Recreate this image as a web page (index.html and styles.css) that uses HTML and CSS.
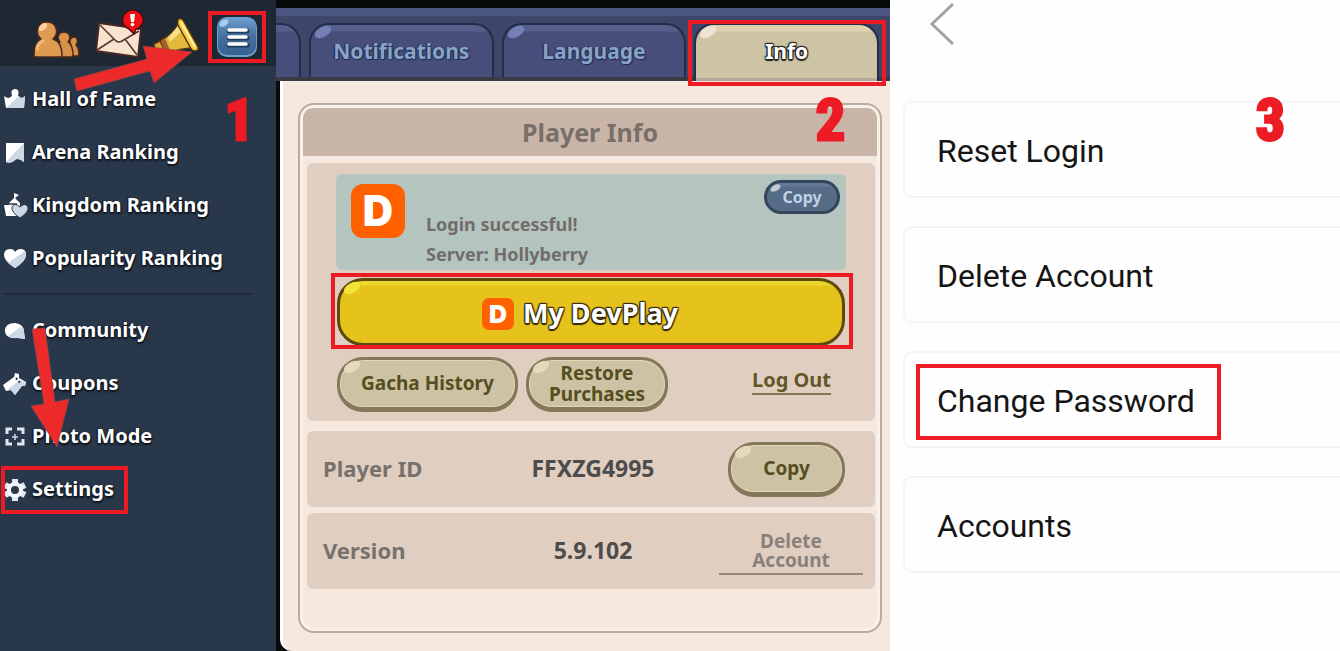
FILE: index.html
```html
<!DOCTYPE html>
<html lang="en">
<head>
<meta charset="utf-8">
<title>Change password guide</title>
<link rel="stylesheet" href="styles.css">
</head>
<body>
<main class="guide">
  <section class="side">
    <header class="side-top">
      <button class="icon-btn" aria-label="Friends">
        <svg width="48" height="52" viewBox="32 4 48 52">
          <g fill="#d8924a" stroke="#4a2a1c" stroke-width="1.5" stroke-linejoin="round">
            <path d="M68 51c0-6 1-9 3-11-3-4 0-8 3-8s5 4 2 8c2 2 3 5 3 9q0 2-2 2z"/>
            <path d="M57 52c0-9 0-12 3-15-4-5-1-10 4-10s8 5 4 10c3 2 5 7 5 13q0 2-2 2z"/>
            <path d="M34 50c0-9 2-14 7-16-7-7-3-17 6-17s13 10 6 17c6 2 9 7 9 16q0 2-2 2H36q-2 0-2-2z" fill="#e09b52"/>
          </g>
          <ellipse cx="43" cy="22" rx="5" ry="3" fill="#fbd3a3" transform="rotate(-40 43 22)"/>
          <path d="M37 44q1-6 6-8" fill="none" stroke="#f2b878" stroke-width="3" stroke-linecap="round"/>
        </svg>
      </button>
      <button class="icon-btn" aria-label="Mail">
        <svg width="56" height="52" viewBox="88 4 56 52">
          <path d="M99 18l42 6-3 28-42-6z" fill="#f8e3cf" stroke="#452824" stroke-width="2" stroke-linejoin="round"/>
          <path d="M100 20l16 16q3 2 6 0l17-10M97 45l17-11M137 50l-12-16" fill="none" stroke="#5a3832" stroke-width="1.6"/>
          <path d="M132 5a11 10 0 0 1 8 17q-2 2-4 2l-2 5-5-5a11 10 0 0 1 3-19z" fill="#ee1216" stroke="#4a0b10" stroke-width="1.5"/>
          <path d="M130 9h5l-1 8h-3z" fill="#fff"/><circle cx="132.500" cy="19.500" r="1.800" fill="#fff"/>
        </svg>
      </button>
      <button class="icon-btn" aria-label="News">
        <svg width="48" height="52" viewBox="152 4 48 52">
          <path d="M154 39l8-4 5 13-6 3c-4-2-7-7-7-12z" fill="#d9a92e" stroke="#533415" stroke-width="1.500"/>
          <path d="M166 48l8-1 3 5-7 2z" fill="#a35b28" stroke="#533415"/>
          <path d="M160 36q12-6 20-20l14 27q-14 0-27 6z" fill="#e2b93c" stroke="#533415" stroke-width="1.500"/>
          <path d="M161 36l4-3 6 15-5 1z" fill="#a9602c"/>
          <path d="M168 33l11-13 3 6-12 11z" fill="#f6df85"/>
          <path d="M178 15q2-3 5 0l15 27q1 4-3 4-3 0-5-4l-12-22q-1-3 0-5z" fill="#f7cf3a" stroke="#533415" stroke-width="1.500"/>
          <path d="M181 17l14 25" stroke="#fff0a6" stroke-width="2"/>
        </svg>
      </button>
      <button class="menu-btn" aria-label="Menu">
        <svg width="42" height="42" viewBox="215 14 42 42">
          <defs><linearGradient id="blue" x2="0" y2="1"><stop stop-color="#6d9fd0"/><stop offset=".5" stop-color="#456f9f"/><stop offset="1" stop-color="#38628f"/></linearGradient></defs>
          <rect x="216" y="15" width="40" height="40" rx="10" fill="#6ba0cf"/>
          <rect x="217" y="16" width="38" height="37" rx="9" fill="url(#blue)"/>
          <ellipse cx="223" cy="21" rx="5" ry="3" fill="#a9cdec" transform="rotate(-35 223 21)"/>
          <path d="M228 29h18M228 36h18M228 43h18" stroke="#213c60" stroke-width="5" stroke-linecap="round"/>
          <path d="M228 28h17M228 35h17M228 42h17" stroke="#fff" stroke-width="3.600" stroke-linecap="round"/>
        </svg>
      </button>
    </header>
    <nav class="nav">
      <a class="nav-link" href="#fame"><svg width="24" height="24" viewBox="0 0 24 24"><path d="M2 20L0 8q2 2 5 2l3-2q-2-7 3-7t3 7l3 2q3 0 4-2l-1 12z" fill="#fff"/><path d="M2 20L15 8l2 2q3 0 4-2l-1 12z" fill="#cdd8e6"/></svg>Hall of Fame</a>
      <a class="nav-link" href="#arena"><svg width="24" height="24" viewBox="0 0 24 24"><path d="M2 2h18v19q-6-5-9-2-4 4-9 2z" fill="#fff"/><path d="M20 2v19q-6-5-9-2-4 4-9 2z" fill="#cdd8e6"/></svg>Arena Ranking</a>
      <a class="nav-link" href="#kingdom"><svg width="24" height="26" viewBox="0 0 24 26"><path d="M0 12h5v-2l5-5V0l5 2-4 3 5 5v4l-2 9H2z" fill="#fff"/><path d="M4 11h9" stroke="#29374a" stroke-width="1.500"/><path d="M16 25q-9-6-8-11 3-5 8 0 5-5 8 0 1 5-8 11z" fill="#cdd8e6" stroke="#29374a"/></svg>Kingdom Ranking</a>
      <a class="nav-link" href="#popularity"><svg width="24" height="24" viewBox="0 0 24 24"><path d="M11 21Q0 14 0 8 0 2 6 2q4 0 5 3 2-3 6-3 5 0 5 6 0 6-11 13z" fill="#fff"/><path d="M11 21l-7-5L21 4q1 2 1 4 0 6-11 13z" fill="#cdd8e6"/></svg>Popularity Ranking</a>
      <hr class="nav-rule">
      <a class="nav-link" href="#community"><svg width="24" height="24" viewBox="0 0 24 24"><path d="M11 4q9 1 9 9l1 7-7-1Q1 20 1 12q0-8 10-8z" fill="#fff"/><path d="M4 17L18 7q2 2 2 6l1 7-7-1q-7 1-10-2z" fill="#cdd8e6"/></svg>Community</a>
      <a class="nav-link" href="#coupons"><svg width="24" height="24" viewBox="0 0 24 24"><path d="M-1 13l11-8 1-4 4 1v4l7 4-1 4h-3l-7 9-4-5-5 1z" fill="#fff"/><path d="M4 17L16 8l6 3-1 3h-3l-7 9-3-4z" fill="#cdd8e6"/><path d="M12 6l5 6" stroke="#29374a" stroke-width="2" stroke-dasharray="2 2"/></svg>Coupons</a>
      <a class="nav-link" href="#photo"><svg width="24" height="24" viewBox="0 0 24 24"><path d="M3 9V4h5M13 4h6v5M19 14v5h-6M8 19H3v-5" fill="none" stroke="#dfe6ef" stroke-width="3"/><path d="M11 9v6M8 12h6" stroke="#cdd8e6" stroke-width="1.500"/></svg>Photo Mode</a>
      <a class="nav-link" href="#settings"><svg width="24" height="24" viewBox="0 0 24 24"><path d="M11 1v22M1 7l20 10M1 17L21 7" stroke="#e3e9f1" stroke-width="6"/><circle cx="11" cy="12" r="6" fill="#29374a" stroke="#f3f6fa" stroke-width="4"/></svg>Settings<span class="frame frame-settings"></span></a>
    </nav>
    <svg class="arrows" width="276" height="460" viewBox="0 0 276 460" aria-hidden="true" fill="#ec2a2a" stroke="#8a4b50" stroke-width=".6">
      <path d="M74 79l3 12 73-20 4 12 38-31-49-6 4 13z"/>
      <path d="M32 329l13-1 10 74 14-3-12 48-26-41 13-2z"/>
    </svg>
    <span class="step step-1">1</span>
  </section>

  <section class="game">
    <div class="tabs">
      <button class="tab tab-cut" aria-label="Previous tab"></button>
      <button class="tab shine">Notifications</button>
      <button class="tab shine">Language</button>
      <button class="tab tab-on shine">Info<span class="frame frame-tab"></span></button>
    </div>
    <div class="sheet">
      <div class="card">
        <h2 class="card-title">Player Info</h2>
        <div class="panel account">
          <div class="login">
            <span class="logo">D</span>
            <p class="login-text">Login successful!<br>Server: Hollyberry</p>
            <button class="copy-small shine">Copy</button>
          </div>
          <button class="devplay shine"><span class="logo logo-small">D</span>My DevPlay<span class="frame frame-dev"></span></button>
          <div class="actions">
            <button class="pill pill-wide shine">Gacha History</button>
            <button class="pill pill-mid shine">Restore<br>Purchases</button>
            <a class="logout" href="#logout">Log Out</a>
          </div>
        </div>
        <div class="panel row">
          <span class="row-label">Player ID</span>
          <span class="row-value">FFXZG4995</span>
          <button class="pill shine">Copy</button>
        </div>
        <div class="panel row">
          <span class="row-label">Version</span>
          <span class="row-value">5.9.102</span>
          <a class="delete" href="#delete">Delete<br>Account</a>
        </div>
      </div>
    </div>
    <span class="step step-2">2</span>
  </section>

  <section class="web">
    <button class="back" aria-label="Back"><svg width="26" height="44" viewBox="0 0 26 44"><path d="M24 2L3 22l21 20" fill="none" stroke="#a3a3a3" stroke-width="3"/></svg></button>
    <div class="options">
      <a class="option" href="#reset">Reset Login</a>
      <a class="option" href="#delete-account">Delete Account</a>
      <a class="option" href="#password">Change Password<span class="frame frame-pass"></span></a>
      <a class="option" href="#accounts">Accounts</a>
    </div>
    <span class="step step-3">3</span>
  </section>
</main>
</body>
</html>
```
FILE: styles.css
```css
* { box-sizing: border-box; }
body { margin: 0; background: #fefefe; font-family: "Noto Sans", "Open Sans", sans-serif; }
button { font: inherit; color: inherit; border: 0; padding: 0; background: none; cursor: pointer; }
a { color: inherit; text-decoration: none; }
svg { display: block; flex: none; }

.guide { display: grid; grid-template-columns: 276fr 614fr 450fr; min-height: 100vh; overflow: hidden; }
.frame { position: absolute; border: 4px solid #ed1c24; pointer-events: none; }
.step { position: absolute; top: 87px; font: bold 58px/66px "Liberation Sans Narrow", "Roboto Condensed", sans-serif; color: #ed1c24; -webkit-text-stroke: 3px #ed1c24; }

/* glossy spot in a button's top left corner */
.shine { position: relative; }
.shine::before { content: ""; position: absolute; left: 3px; top: 2px; width: 18px; height: 10px; border-radius: 50%; background: #e4dabc; transform: rotate(-30deg); }

/* left: game menu */
.side { position: relative; background: #29374a; }
.side-top { display: flex; gap: 8px; height: 66px; padding: 4px 9px 0 32px; background: #1e2833; }
.menu-btn { display: grid; place-items: center; width: 58px; height: 52px; margin-top: 7px; border: 4px solid #ed1c24; }
.nav { display: flex; flex-direction: column; gap: 21px; padding: 16px 24px 0 4px; }
.nav-link { position: relative; display: flex; align-items: center; gap: 4px; height: 32px; align-self: flex-start;
  font-weight: bold; font-size: 20px; color: #fff; text-shadow: 1px 1px 1px #10161f, 0 2px 2px #10161f, -1px 0 1px #10161f; }
.nav-link svg { margin-top: 4px; overflow: visible; }
.nav-rule { width: 100%; height: 2px; margin: -1px 0 -3px; border: 0; background: #1f2b3a; }
.arrows { position: absolute; top: 0; left: 0; }
.frame-settings { inset: -6px -14px -10px -3px; }
.step-1 { right: 22px; }

/* middle: settings window */
.game { position: relative; display: flex; flex-direction: column; padding-top: 8px; background: #080b0c; }
.tabs { display: flex; gap: 8px; height: 73px; padding: 15px 11px 0 0; border-bottom: 4px solid #383b44;
  background: linear-gradient(#4b5680 8px, #3e4669 8px); }
.tab { position: relative; flex: 1; border: 2px solid #232c49; border-bottom: 0; border-radius: 20px 20px 0 0;
  background: linear-gradient(#565f8c 6px, #474e7a 7px);
  font-weight: bold; font-size: 21px; color: #88a3c8; text-shadow: 1px 1px 1px #202a48, -1px 0 1px #202a48; }
.tab::before { background: #7380b8; }
.tab-cut { flex: 0 0 25px; border-left: 0; border-radius: 0 20px 0 0; }
.tab-on { margin-bottom: -4px; padding-bottom: 4px; color: #fff; text-shadow: 1px 1px 1px #222, -1px -1px 1px #222, 1px -1px 1px #222, -1px 1px 1px #222, 0 2px 1px #222;
  background: linear-gradient(#e2d1b0 6px, #ccc4a5 7px 53px, #b3a69a 53px); }
.tab-on::before { background: #efe3d2; }
.frame-tab { inset: -5px -9px -5px -8px; z-index: 1; }
.sheet { flex: 1; margin-left: 4px; padding: 22px 8px 18px 15px; border-left: 3px solid #fff; border-radius: 0 0 0 12px; background: #f5e8de; }
.card { display: flex; flex-direction: column; min-height: 530px; padding: 3px; border: 2px solid #bbaa9f; border-radius: 16px; box-shadow: inset 0 0 0 3px #faf1ea; }
.card-title { margin: 0 0 7px; border-radius: 10px 10px 0 0; font-size: 25px; line-height: 48px; text-align: center; color: #796f69; background: #c9b5a7; }
.panel { margin: 0 2px 6px 4px; border-radius: 6px; background: #e0cec0; }
.account { margin-bottom: 10px; padding: 11px 29px 9px; }
.login { display: flex; align-items: flex-start; height: 96px; padding: 6px 6px 0 15px; border-radius: 6px; background: #b4c5c0; }
.logo { display: grid; place-items: center; width: 54px; height: 54px; margin-top: 4px; border-radius: 12px; background: #ff6000;
  font: 900 42px/54px Inter, "Open Sans", sans-serif; color: #fff; }
.login-text { flex: 1; margin: 29px 0 0 21px; font-size: 18px; line-height: 30px; font-weight: bold; color: #716d69; }
.copy-small { width: 76px; height: 34px; border: 3px solid #35465a; border-radius: 17px; font-weight: bold; font-size: 16px; line-height: 20px; color: #c0d2e6;
  background: linear-gradient(#64799a 3px, #566c87 4px); }
.copy-small::before { width: 11px; height: 6px; background: #c3ccd5; }
.devplay { display: flex; align-items: center; justify-content: center; gap: 9px; width: calc(100% - 2px); height: 68px; margin: 8px 0 0 1px; padding-right: 22px;
  border: 3px solid #5b4a0c; border-radius: 26px; font-weight: bold; font-size: 27px; color: #fff;
  text-shadow: 1px 1px 1px #31280a, -1px -1px 1px #31280a, 1px -1px 1px #31280a, -1px 1px 1px #31280a, 0 2px 1px #31280a;
  background: linear-gradient(#e9d72c 4px, #e6c21d 5px); }
.devplay::before { background: #f2e436; }
.logo-small { width: 32px; height: 32px; margin: 3px 0 0; border-radius: 7px; font-size: 25px; line-height: 32px; text-shadow: none; }
.frame-dev { inset: -8px -11px -6px -9px; }
.actions { display: flex; gap: 8px; margin: 11px 0 0 1px; }
.pill { width: 117px; height: 55px; border: 3px solid #857859; border-bottom-width: 5px; border-radius: 26px; font-weight: bold; font-size: 19px; line-height: 21px; color: #564d20;
  background: #ccc3a4; box-shadow: inset 0 0 0 1px #e2d8b9; }
.pill-wide { width: 181px; }
.pill-mid { width: 142px; }
.logout { margin: 10px 15px 0 auto; height: 28px; border-bottom: 2px solid #85774e; font-weight: bold; font-size: 20px; line-height: 26px; color: #625728; }
.row { display: grid; grid-template-columns: 1fr 1fr 1fr; align-items: center; height: 76px; padding: 0 12px 0 16px; font-weight: bold; font-size: 22px; line-height: 28px; color: #77716d; }
.row-label, .row-value { padding-bottom: 3px; }
.row-value { font-size: 23px; text-align: center; color: #4d4c4d; }
.row .pill { justify-self: end; margin-right: 18px; }
.delete { justify-self: end; width: 144px; border-bottom: 2px solid #958b84; padding: 5px 0 3px; text-align: center; font-size: 19px; line-height: 19px; color: #8a807a; }
.step-2 { right: 45px; }

/* right: account page */
.web { position: relative; padding: 2px 0 0 13px; font-family: Roboto, sans-serif; }
.back { display: block; margin: 0 0 55px 26px; }
.options { display: flex; flex-direction: column; gap: 28px; }
.option { display: flex; align-items: center; position: relative; height: 97px; padding: 3px 0 0 32px; border: 2px solid #f1f5fb; border-right: 0; border-radius: 9px 0 0 9px; font-size: 32px; color: #151515; }
.frame-pass { left: 11px; top: 11px; width: 305px; height: 76px; }
.step-3 { right: 55px; }
```
